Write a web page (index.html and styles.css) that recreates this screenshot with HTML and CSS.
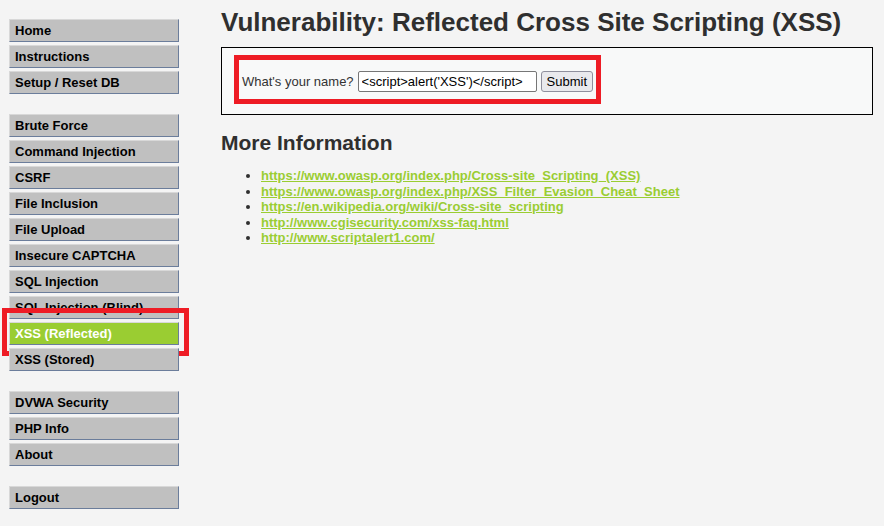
FILE: index.html
```
<!DOCTYPE html>
<html lang="en">
<head>
    <meta charset="UTF-8">
    <meta name="viewport" content="width=device-width, initial-scale=1.0">
    <title>Vulnerability: Reflected Cross Site Scripting (XSS)</title>
    <link rel="stylesheet" href="styles.css">
</head>
<body>

    <div class="page">
        <!-- Left menu -->
        <div id="main_menu">
            <ul class="menu_group">
                <li><a href="#">Home</a></li>
                <li><a href="#">Instructions</a></li>
                <li><a href="#">Setup / Reset DB</a></li>
            </ul>
            <ul class="menu_group">
                <li><a href="#">Brute Force</a></li>
                <li><a href="#">Command Injection</a></li>
                <li><a href="#">CSRF</a></li>
                <li><a href="#">File Inclusion</a></li>
                <li><a href="#">File Upload</a></li>
                <li><a href="#">Insecure CAPTCHA</a></li>
                <li><a href="#">SQL Injection</a></li>
                <li><a href="#">SQL Injection (Blind)</a></li>
                <li class="selected"><a href="#">XSS (Reflected)</a><span class="mark mark-menu"></span></li>
                <li><a href="#">XSS (Stored)</a></li>
            </ul>
            <ul class="menu_group">
                <li><a href="#">DVWA Security</a></li>
                <li><a href="#">PHP Info</a></li>
                <li><a href="#">About</a></li>
            </ul>
            <ul class="menu_group">
                <li><a href="#">Logout</a></li>
            </ul>
        </div>

        <!-- Main body -->
        <div id="main_body">
            <h1>Vulnerability: Reflected Cross Site Scripting (XSS)</h1>

            <div class="vulnerable_code_area">
                <form class="xss_form" onsubmit="return false;">
                    <span class="mark mark-form"></span>
                    <label for="name">What's your name?</label>
                    <input type="text" id="name" name="name" value="<script>alert('XSS')</script>">
                    <button type="submit">Submit</button>
                </form>
            </div>

            <h2>More Information</h2>
            <ul class="info_links">
                <li><a href="#">https://www.owasp.org/index.php/Cross-site_Scripting_(XSS)</a></li>
                <li><a href="#">https://www.owasp.org/index.php/XSS_Filter_Evasion_Cheat_Sheet</a></li>
                <li><a href="#">https://en.wikipedia.org/wiki/Cross-site_scripting</a></li>
                <li><a href="#">http://www.cgisecurity.com/xss-faq.html</a></li>
                <li><a href="#">http://www.scriptalert1.com/</a></li>
            </ul>
        </div>
    </div>

</body>
</html>
```

FILE: styles.css
```
body {
    margin: 0;
    background: #f4f4f4;
    font-family: "Liberation Sans", Arial, sans-serif;
    font-size: 13px;
    color: #2f2f2f;
}
.page {
    display: flex;
    align-items: flex-start;
    padding: 19px 11px 0 9px;
}

/* menu */
#main_menu {
    width: 170px;
    flex-shrink: 0;
}
.menu_group {
    list-style: none;
    margin: 0 0 20px 0;
    padding: 0;
}
.menu_group li {
    position: relative;
    margin-bottom: 3px;
}
.menu_group a {
    display: block;
    height: 21px;
    line-height: 21px;
    padding-left: 5px;
    background: #c0c0c0;
    border-top: 1px solid #d8d8d8;
    border-left: 1px solid #d8d8d8;
    border-right: 1px solid #6b7d9b;
    border-bottom: 1px solid #6b7d9b;
    color: #000;
    font-weight: bold;
    text-decoration: none;
}
.menu_group li.selected a {
    background: #9acd32;
    color: #fff;
}

/* red annotation boxes */
.mark {
    position: absolute;
    border: 5px solid #ee1c25;
    pointer-events: none;
}
.mark-menu {
    left: -7px;
    top: -14px;
    width: 177px;
    height: 38px;
}
.mark-form {
    left: -8px;
    top: -16px;
    width: 357px;
    height: 39px;
}

/* main */
#main_body {
    flex: 1;
    margin-left: 42px;
}
h1 {
    margin: -13px 0 0 0;
    font-size: 26px;
    line-height: 32px;
    color: #2f2f2f;
}
.vulnerable_code_area {
    margin-top: 9px;
    height: 66px;
    background: #f8f9f9;
    border: 1px solid #000;
    padding-left: 20px;
}
.xss_form {
    position: relative;
    display: flex;
    align-items: center;
    margin-top: 23px;
}
.xss_form label {
    color: #333;
    margin-right: 4px;
}
.xss_form input {
    width: 171px;
    height: 19px;
    padding: 0 3px;
    border: 1px solid #767676;
    border-radius: 2px;
    font-family: inherit;
    font-size: 13px;
    color: #000;
    background: #fff;
}
.xss_form button {
    margin-left: 4px;
    height: 21px;
    padding: 0 5px;
    background: #e9e9ed;
    border: 1px solid #8f8f9d;
    border-radius: 3px;
    font-family: inherit;
    font-size: 13px;
    color: #000;
}
h2 {
    margin: 15px 0 0 0;
    font-size: 21px;
    line-height: 25px;
    color: #2f2f2f;
}
.info_links {
    margin: 13px 0 0 0;
    padding-left: 40px;
}
.info_links li {
    line-height: 15.5px;
}
.info_links a {
    color: #9acd32;
    font-weight: bold;
}
```
